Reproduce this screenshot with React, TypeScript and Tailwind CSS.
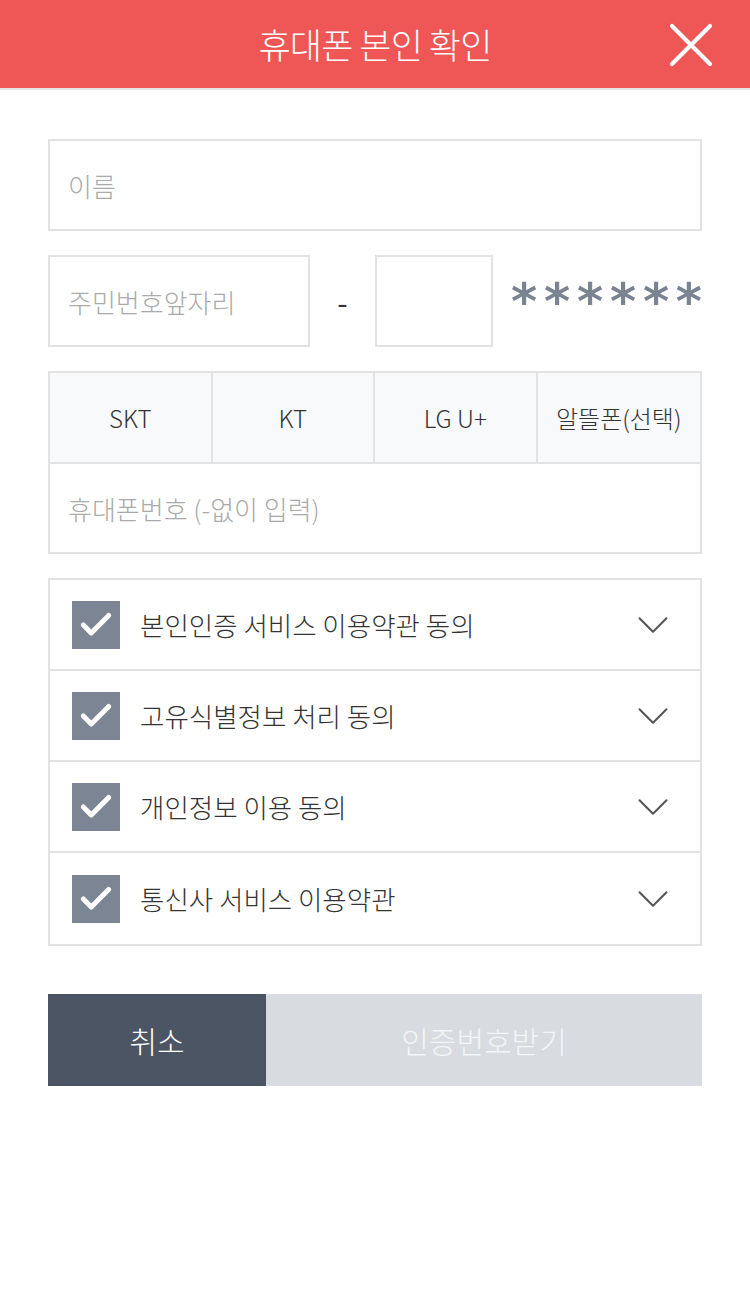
import { Check, ChevronDown, X } from "lucide-react";

const terms = [
  "본인인증 서비스 이용약관 동의",
  "고유식별정보 처리 동의",
  "개인정보 이용 동의",
  "통신사 서비스 이용약관",
];

const carriers = ["SKT", "KT", "LG U+", "알뜰폰(선택)"];

export default function App() {
  return (
    <div
      className="w-[750px] min-h-[1293px] bg-white"
      style={{ fontFamily: '"Noto Sans CJK KR", "Noto Sans", sans-serif' }}
    >
      <header className="relative h-[90px] bg-[#ef5656] border-b-2 border-[#e6e6e6] flex items-center justify-center">
        <h1 className="text-white text-[35px] font-light tracking-tight">휴대폰 본인 확인</h1>
        <button className="absolute right-[21px] top-[7px] text-white">
          <X size={76} strokeWidth={1.3} />
        </button>
      </header>

      <div className="px-[48px] pt-[49px]">
        <div className="h-[92px] border-2 border-[#e2e2e2] flex items-center px-[18px] text-[26px] text-[#aaaaaa] font-light">
          이름
        </div>

        <div className="mt-[24px] flex items-center">
          <div className="w-[262px] shrink-0 h-[92px] border-2 border-[#e2e2e2] flex items-center px-[18px] text-[26px] text-[#aaaaaa] font-light">
            주민번호앞자리
          </div>
          <div className="w-[65px] shrink-0 text-center text-[30px] text-[#333]">-</div>
          <div className="w-[118px] shrink-0 h-[92px] border-2 border-[#e2e2e2]" />
          <div
            className="ml-[18px] flex-1 flex justify-between text-[50px] font-bold leading-none text-[#7a8391] pt-[2px]"
            style={{ fontFamily: '"DejaVu Sans", sans-serif' }}
          >
            {Array.from({ length: 6 }).map((_, i) => (
              <span key={i}>*</span>
            ))}
          </div>
        </div>

        <div className="mt-[24px] border-2 border-[#e2e2e2]">
          <div className="grid grid-cols-4 h-[91px] bg-[#f7f9fb] border-b-2 border-[#e2e2e2]">
            {carriers.map((c, i) => (
              <div
                key={c}
                className={
                  "flex items-center justify-center text-[24px] text-[#333] font-light" +
                  (i < 3 ? " border-r-2 border-[#e2e2e2]" : "")
                }
              >
                {c}
              </div>
            ))}
          </div>
          <div className="h-[88px] flex items-center px-[18px] text-[26px] text-[#aaaaaa] font-light">
            휴대폰번호 (-없이 입력)
          </div>
        </div>

        <div className="mt-[24px] border-2 border-[#e2e2e2]">
          {terms.map((t, i) => (
            <div
              key={t}
              className={
                "h-[91px] flex items-center pl-[22px] pr-[20px]" +
                (i < terms.length - 1 ? " border-b-2 border-[#e2e2e2]" : "")
              }
            >
              <div className="w-[48px] h-[48px] bg-[#7c8594] flex items-center justify-center">
                <Check size={38} strokeWidth={3.2} className="text-white" />
              </div>
              <span className="ml-[20px] flex-1 text-[26.5px] text-[#333] font-light">{t}</span>
              <ChevronDown size={54} strokeWidth={0.9} className="text-[#555]" />
            </div>
          ))}
        </div>

        <div className="mt-[48px] flex h-[92px]">
          <button className="w-[218px] bg-[#4c5564] text-white text-[30px] font-light">취소</button>
          <button className="flex-1 bg-[#d8dce0] text-[#f4f5f6] text-[30px] font-light">인증번호받기</button>
        </div>
      </div>
    </div>
  );
}
